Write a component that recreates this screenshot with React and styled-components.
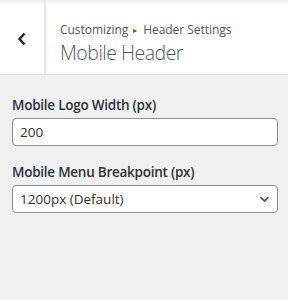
import React from 'react';
import styled, { createGlobalStyle } from 'styled-components';

const GlobalStyle = createGlobalStyle`
  html, body {
    margin: 0;
    padding: 0;
    background: #f0f0f1;
  }
  body {
    font-family: "Open Sans", "Noto Sans", sans-serif;
    color: #2c3338;
  }
`;

const Panel = styled.div`
  width: 288px;
  height: 300px;
  background: #f0f0f1;
  overflow: hidden;
`;

const SectionHeader = styled.div`
  display: flex;
  box-sizing: border-box;
  height: 75px;
  border-top: 3px solid #f0f0f1;
  border-bottom: 1px solid #dcdcde;
  background: #fff;
`;

const BackButton = styled.button`
  flex: 0 0 46px;
  box-sizing: border-box;
  display: flex;
  align-items: center;
  justify-content: center;
  margin: -3px 0 0 0;
  padding: 3px 0 0 0;
  background: linear-gradient(#f0f0f1 0 3px, #fff 3px);
  border: none;
  border-right: 2px solid #e6e6e6;
  cursor: pointer;
`;

const TitleBlock = styled.div`
  display: flex;
  flex-direction: column;
  padding: 17px 0 0 14px;
`;

const Crumbs = styled.span`
  font-size: 12px;
  line-height: 20px;
  color: #50575e;
  letter-spacing: -0.05px;
`;

const Arrow = styled.span`
  font-size: 8px;
  margin: 0 6px 0 5px;
  vertical-align: 1px;
`;

const Title = styled.h3`
  margin: 0;
  font-size: 19.5px;
  line-height: 25px;
  font-weight: 300;
  color: #50575e;
  letter-spacing: -0.5px;
`;

const Controls = styled.div`
  display: flex;
  flex-direction: column;
  gap: 17px;
  padding: 21px 10px 0 12px;
`;

const Control = styled.label`
  display: flex;
  flex-direction: column;
  gap: 4px;
`;

const ControlTitle = styled.span`
  font-size: 13.5px;
  line-height: 18px;
  font-weight: 600;
  color: #2c3338;
  letter-spacing: -0.25px;
`;

const Field = styled.div`
  box-sizing: border-box;
  display: flex;
  align-items: center;
  justify-content: space-between;
  height: 28px;
  padding: 0 7px 0 7px;
  background: #fff;
  border: 1px solid #8c8f94;
  border-radius: 4px;
  font-size: 13.5px;
  color: #2c3338;
`;

function Chevron() {
  return (
    <svg width="11" height="8" viewBox="0 0 11 8" fill="none">
      <path d="M1.5 2.2 5.5 6 9.5 2.2" stroke="#50575e" strokeWidth="1.8" />
    </svg>
  );
}

function BackIcon() {
  return (
    <svg width="10" height="14" viewBox="0 0 10 14" fill="none">
      <path d="M7.5 1.5 2.5 7l5 5.5" stroke="#1d2327" strokeWidth="2.4" />
    </svg>
  );
}

function App() {
  return (
    <Panel>
      <GlobalStyle />
      <SectionHeader>
        <BackButton aria-label="Back">
          <BackIcon />
        </BackButton>
        <TitleBlock>
          <Crumbs>
            Customizing<Arrow>▸</Arrow>Header Settings
          </Crumbs>
          <Title>Mobile Header</Title>
        </TitleBlock>
      </SectionHeader>

      <Controls>
        <Control>
          <ControlTitle>Mobile Logo Width (px)</ControlTitle>
          <Field>200</Field>
        </Control>
        <Control>
          <ControlTitle>Mobile Menu Breakpoint (px)</ControlTitle>
          <Field>
            1200px (Default)
            <Chevron />
          </Field>
        </Control>
      </Controls>
    </Panel>
  );
}

export default App;
